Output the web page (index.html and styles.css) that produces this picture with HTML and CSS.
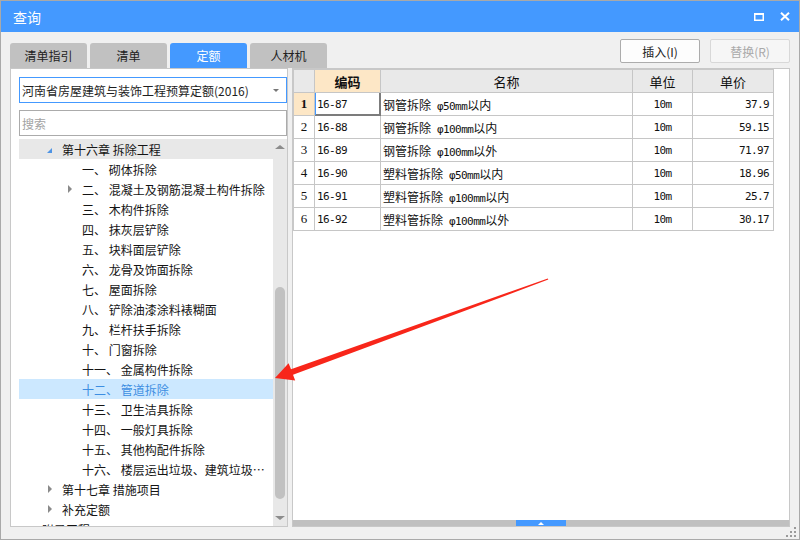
FILE: index.html
```html
<!DOCTYPE html>
<html lang="zh">
<head>
<meta charset="utf-8">
<title>查询</title>
<link rel="stylesheet" href="styles.css">
</head>
<body>
<div class="window">
  <div class="titlebar">
    <span class="title">查询</span>
    <div class="ctrls">
      <svg class="ico-max" width="10" height="8" viewBox="0 0 10 8"><rect x="0.75" y="1" width="8.5" height="6.25" fill="none" stroke="#fff" stroke-width="1.5"/><rect x="0" y="0" width="10" height="2" fill="#fff"/></svg>
      <svg class="ico-close" width="10" height="9" viewBox="0 0 10 9"><path d="M1 0.8 L9 8.2 M9 0.8 L1 8.2" stroke="#fff" stroke-width="2" fill="none"/></svg>
    </div>
  </div>

  <div class="toolbar">
    <div class="tabs">
      <div class="tab">清单指引</div>
      <div class="tab">清单</div>
      <div class="tab active">定额</div>
      <div class="tab">人材机</div>
    </div>
    <div class="btns">
      <div class="btn">插入(I)</div>
      <div class="btn disabled">替换(R)</div>
    </div>
  </div>

  <div class="main">
    <div class="left">
      <div class="select">
        <span>河南省房屋建筑与装饰工程预算定额(2016)</span>
        <span class="caret"></span>
      </div>
      <div class="search">搜索</div>
      <div class="tree">
        <div class="tree-list">
          <div class="row l1 head"><span class="tg"><i class="tri-open"></i></span><span class="tx">第十六章 拆除工程</span></div>
          <div class="row l2"><span class="tg"></span><span class="tx">一、 砌体拆除</span></div>
          <div class="row l2"><span class="tg"><i class="tri-closed"></i></span><span class="tx">二、 混凝土及钢筋混凝土构件拆除</span></div>
          <div class="row l2"><span class="tg"></span><span class="tx">三、 木构件拆除</span></div>
          <div class="row l2"><span class="tg"></span><span class="tx">四、 抹灰层铲除</span></div>
          <div class="row l2"><span class="tg"></span><span class="tx">五、 块料面层铲除</span></div>
          <div class="row l2"><span class="tg"></span><span class="tx">六、 龙骨及饰面拆除</span></div>
          <div class="row l2"><span class="tg"></span><span class="tx">七、 屋面拆除</span></div>
          <div class="row l2"><span class="tg"></span><span class="tx">八、 铲除油漆涂料裱糊面</span></div>
          <div class="row l2"><span class="tg"></span><span class="tx">九、 栏杆扶手拆除</span></div>
          <div class="row l2"><span class="tg"></span><span class="tx">十、 门窗拆除</span></div>
          <div class="row l2"><span class="tg"></span><span class="tx">十一、 金属构件拆除</span></div>
          <div class="row l2 sel"><span class="tg"></span><span class="tx">十二、 管道拆除</span></div>
          <div class="row l2"><span class="tg"></span><span class="tx">十三、 卫生洁具拆除</span></div>
          <div class="row l2"><span class="tg"></span><span class="tx">十四、 一般灯具拆除</span></div>
          <div class="row l2"><span class="tg"></span><span class="tx">十五、 其他构配件拆除</span></div>
          <div class="row l2"><span class="tg"></span><span class="tx">十六、 楼层运出垃圾、建筑垃圾外运</span></div>
          <div class="row l1"><span class="tg"><i class="tri-closed"></i></span><span class="tx">第十七章 措施项目</span></div>
          <div class="row l1"><span class="tg"><i class="tri-closed"></i></span><span class="tx">补充定额</span></div>
          <div class="row l0"><span class="tg"></span><span class="tx">附录工程</span></div>
        </div>
        <div class="vscroll">
          <div class="arr"><i class="up"></i></div>
          <div class="thumb"></div>
          <div class="fill"></div>
          <div class="arr"><i class="down"></i></div>
        </div>
      </div>
    </div>

    <div class="right">
      <div class="grid">
        <div class="c hd"></div>
        <div class="c hd hcode">编码</div>
        <div class="c hd">名称</div>
        <div class="c hd">单位</div>
        <div class="c hd">单价</div>

        <div class="c num cur">1</div>
        <div class="c code selcell">16-87</div>
        <div class="c name"><span>钢管拆除<span class="m">&nbsp;φ50mm</span>以内</span></div>
        <div class="c unit">10m</div>
        <div class="c price">37.9</div>

        <div class="c num">2</div>
        <div class="c code">16-88</div>
        <div class="c name"><span>钢管拆除<span class="m">&nbsp;φ100mm</span>以内</span></div>
        <div class="c unit">10m</div>
        <div class="c price">59.15</div>

        <div class="c num">3</div>
        <div class="c code">16-89</div>
        <div class="c name"><span>钢管拆除<span class="m">&nbsp;φ100mm</span>以外</span></div>
        <div class="c unit">10m</div>
        <div class="c price">71.97</div>

        <div class="c num">4</div>
        <div class="c code">16-90</div>
        <div class="c name"><span>塑料管拆除<span class="m">&nbsp;φ50mm</span>以内</span></div>
        <div class="c unit">10m</div>
        <div class="c price">18.96</div>

        <div class="c num">5</div>
        <div class="c code">16-91</div>
        <div class="c name"><span>塑料管拆除<span class="m">&nbsp;φ100mm</span>以内</span></div>
        <div class="c unit">10m</div>
        <div class="c price">25.7</div>

        <div class="c num">6</div>
        <div class="c code">16-92</div>
        <div class="c name"><span>塑料管拆除<span class="m">&nbsp;φ100mm</span>以外</span></div>
        <div class="c unit">10m</div>
        <div class="c price">30.17</div>
      </div>
      <div class="spacer"></div>
      <div class="hscroll"><div class="hthumb"><i class="up white"></i></div></div>
    </div>
  </div>

  <div class="footer">
    <svg width="11" height="11" viewBox="0 0 11 11">
      <g fill="#9a9a9a">
        <rect x="8" y="0" width="2" height="2"/>
        <rect x="4" y="4" width="2" height="2"/><rect x="8" y="4" width="2" height="2"/>
        <rect x="0" y="8" width="2" height="2"/><rect x="4" y="8" width="2" height="2"/><rect x="8" y="8" width="2" height="2"/>
      </g>
    </svg>
  </div>

  <svg class="arrow" width="800" height="540" viewBox="0 0 800 540">
    <polygon fill="#f8261a" points="275,378 288.6,363.2 291,369.2 547.8,278.4 548.3,279.6 293,374.8 295.2,380.6"/>
  </svg>
</div>
</body>
</html>
```

FILE: styles.css
```css
* { box-sizing: border-box; margin: 0; padding: 0; }
html, body { width: 800px; height: 540px; overflow: hidden; }
body {
  font-family: "Noto Sans CJK SC", "Noto Sans", sans-serif;
  font-size: 12px;
  color: #1e1e1e;
  background: #f0f0f0;
}
.window {
  position: relative;
  width: 800px;
  height: 540px;
  border: 1px solid #a9a9a9;
  background: #f0f0f0;
  display: flex;
  flex-direction: column;
}
.titlebar {
  height: 31px;
  flex: none;
  background: #4499ff;
  color: #fff;
  display: flex;
  align-items: center;
  padding: 0 9px 0 12px;
}
.title { font-size: 14px; }
.ctrls { margin-left: auto; display: flex; align-items: center; gap: 16px; }

.toolbar {
  margin-top: 7px;
  height: 29px;
  flex: none;
  padding: 0 9px;
  display: flex;
  justify-content: space-between;
}
.tabs { display: flex; gap: 3px; align-self: flex-end; }
.tab {
  width: 77px;
  height: 25px;
  background: #c1c1c1;
  border-radius: 3px 3px 0 0;
  display: flex;
  align-items: center;
  justify-content: center;
  color: #222;
}
.tab.active { background: #4499ff; color: #fff; }
.btns { display: flex; gap: 10px; align-self: flex-start; }
.btn {
  width: 80px;
  height: 24px;
  background: #fdfdfd;
  border: 1px solid #acacac;
  border-radius: 2px;
  display: flex;
  align-items: center;
  justify-content: center;
  color: #222;
}
.btn.disabled { background: #f6f6f6; border-color: #d8d8d8; color: #a9a9a9; }

.main {
  height: 459px;
  flex: none;
  padding: 0 9px;
  display: flex;
  gap: 4px;
}
.left {
  width: 278px;
  flex: none;
  background: #fff;
  border: 1px solid #c8c8c8;
  padding: 8px 0 0 8px;
  display: flex;
  flex-direction: column;
  overflow: hidden;
}
.select {
  height: 26px;
  flex: none;
  border: 1px solid #4499ff;
  display: flex;
  align-items: center;
  justify-content: space-between;
  padding: 0 7px 0 2px;
  color: #1e1e1e;
}
.caret {
  width: 0; height: 0;
  border-left: 3px solid transparent;
  border-right: 3px solid transparent;
  border-top: 3px solid #777;
}
.search {
  margin-top: 7px;
  height: 26px;
  flex: none;
  border: 1px solid #ababab;
  display: flex;
  align-items: center;
  padding-left: 2px;
  color: #a3a3a3;
}
.tree {
  margin-top: 3px;
  flex: 1;
  display: flex;
  min-height: 0;
}
.tree-list { flex: 1; min-width: 0; overflow: hidden; }
.row {
  height: 20px;
  display: flex;
  align-items: center;
  white-space: nowrap;
  color: #141414;
}
.row.l0 { padding-left: 8px; }
.row.l1 { padding-left: 28px; }
.row.l2 { padding-left: 48px; }
.row.head { background: #e8e8e8; }
.row.sel { background: #cce8ff; color: #3d8ee2; }
.tg { width: 15px; flex: none; display: flex; align-items: center; }
.tx { overflow: hidden; text-overflow: ellipsis; min-width: 0; }
.tri-open {
  display: block;
  width: 0; height: 0;
  border-style: solid;
  border-width: 0 0 5px 5px;
  border-color: transparent transparent #4f94e4 transparent;
  margin-top: 2px;
}
.tri-closed {
  display: block;
  width: 0; height: 0;
  border-left: 4px solid #8a8a8a;
  border-top: 4px solid transparent;
  border-bottom: 4px solid transparent;
  margin-left: 1px;
}
.vscroll {
  width: 14px;
  flex: none;
  background: #e8e8e8;
  display: flex;
  flex-direction: column;
  align-items: center;
}
.arr { height: 16px; flex: none; width: 14px; display: flex; align-items: center; justify-content: center; }
.up {
  display: block; width: 0; height: 0;
  border-left: 5px solid transparent;
  border-right: 5px solid transparent;
  border-bottom: 4px solid #8c8c8c;
}
.down {
  display: block; width: 0; height: 0;
  border-left: 5px solid transparent;
  border-right: 5px solid transparent;
  border-top: 4px solid #8c8c8c;
}
.thumb {
  margin-top: 132px;
  width: 10px;
  height: 212px;
  flex: none;
  border-radius: 5px;
  background: #c1c1c1;
}
.fill { flex: 1; }

.right {
  flex: 1;
  background: #fff;
  border: 1px solid #c8c8c8;
  display: flex;
  flex-direction: column;
  min-width: 0;
}
.grid {
  display: grid;
  grid-template-columns: 21px 66px 252px 60px 81px;
  grid-auto-rows: 23px;
  width: 481px;
  border-left: 1px solid #c8c8c8;
  border-top: 1px solid #c8c8c8;
}
.c {
  border-right: 1px solid #c6c6c6;
  border-bottom: 1px solid #c6c6c6;
  display: flex;
  align-items: center;
  white-space: nowrap;
  overflow: hidden;
  color: #111;
}
.hd { background: #e9e9e9; justify-content: center; font-size: 13px; }
.hd.hcode { background: #fde7c6; font-weight: bold; }
.num {
  justify-content: center;
  font-family: "Liberation Serif", serif;
  font-size: 13px;
}
.num.cur { background: #fde7c6; font-weight: bold; }
.code, .unit, .price, .m {
  font-family: "DejaVu Sans Mono", monospace;
  font-size: 11px;
  letter-spacing: -0.6px;
}
.code { padding-left: 2px; }
.name { padding-left: 2px; font-size: 12px; }
.unit { justify-content: center; }
.price { justify-content: flex-end; padding-right: 4px; }
.selcell {
  border-right-color: #7c7c7c;
  border-bottom-color: #7c7c7c;
  box-shadow: inset 1px 0 0 #4499ff, inset -1px -1px 0 #7c7c7c;
}
.spacer { flex: 1; }
.hscroll {
  height: 6px;
  flex: none;
  background: #c0c0c0;
  display: flex;
  justify-content: center;
}
.hthumb {
  width: 50px;
  background: #4499ff;
  display: flex;
  align-items: center;
  justify-content: center;
}
.up.white { border-left-width: 3px; border-right-width: 3px; border-bottom: 3px solid #fff; }

.footer {
  height: 12px;
  flex: none;
  display: flex;
  justify-content: flex-end;
  align-items: flex-start;
  padding: 0 2px 0 0;
}
.arrow {
  position: absolute;
  left: -1px;
  top: -1px;
  pointer-events: none;
}
```
